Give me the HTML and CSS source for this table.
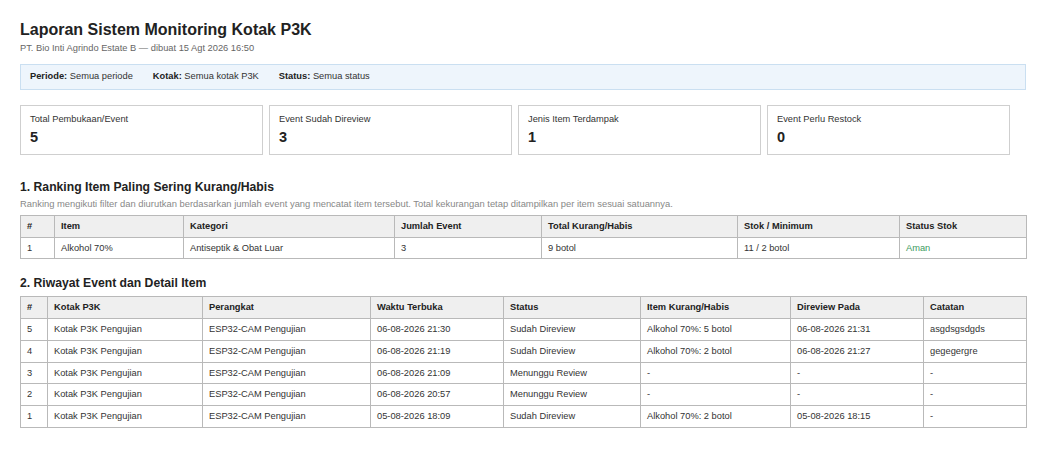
FILE: index.html
```html
<!DOCTYPE html>
<html lang="id">
<head>
<meta charset="utf-8">
<title>Laporan Sistem Monitoring Kotak P3K</title>
<link rel="stylesheet" href="styles.css">
</head>
<body>
<header class="report-head">
  <h1 class="title">Laporan Sistem Monitoring Kotak P3K</h1>
  <p class="subtitle">PT. Bio Inti Agrindo Estate B — dibuat 15 Agt 2026 16:50</p>
</header>

<div class="filters">
  <span class="filter"><b>Periode:</b> Semua periode</span>
  <span class="filter"><b>Kotak:</b> Semua kotak P3K</span>
  <span class="filter"><b>Status:</b> Semua status</span>
</div>

<div class="cards">
  <div class="card"><div class="card-label">Total Pembukaan/Event</div><div class="card-value">5</div></div>
  <div class="card"><div class="card-label">Event Sudah Direview</div><div class="card-value">3</div></div>
  <div class="card"><div class="card-label">Jenis Item Terdampak</div><div class="card-value">1</div></div>
  <div class="card"><div class="card-label">Event Perlu Restock</div><div class="card-value">0</div></div>
</div>

<section class="section">
  <h2 class="section-title">1. Ranking Item Paling Sering Kurang/Habis</h2>
  <p class="caption">Ranking mengikuti filter dan diurutkan berdasarkan jumlah event yang mencatat item tersebut. Total kekurangan tetap ditampilkan per item sesuai satuannya.</p>
  <table class="grid rank">
    <colgroup>
      <col class="r1"><col class="r2"><col class="r3"><col class="r4"><col class="r5"><col class="r6"><col class="r7">
    </colgroup>
    <thead>
      <tr><th>#</th><th>Item</th><th>Kategori</th><th>Jumlah Event</th><th>Total Kurang/Habis</th><th>Stok / Minimum</th><th>Status Stok</th></tr>
    </thead>
    <tbody>
      <tr><td>1</td><td>Alkohol 70%</td><td>Antiseptik &amp; Obat Luar</td><td>3</td><td>9 botol</td><td>11 / 2 botol</td><td class="ok">Aman</td></tr>
    </tbody>
  </table>
</section>

<section class="section second">
  <h2 class="section-title">2. Riwayat Event dan Detail Item</h2>
  <table class="grid history">
    <colgroup>
      <col class="h1"><col class="h2"><col class="h3"><col class="h4"><col class="h5"><col class="h6"><col class="h7"><col class="h8">
    </colgroup>
    <thead>
      <tr><th>#</th><th>Kotak P3K</th><th>Perangkat</th><th>Waktu Terbuka</th><th>Status</th><th>Item Kurang/Habis</th><th>Direview Pada</th><th>Catatan</th></tr>
    </thead>
    <tbody>
      <tr><td>5</td><td>Kotak P3K Pengujian</td><td>ESP32-CAM Pengujian</td><td>06-08-2026 21:30</td><td>Sudah Direview</td><td>Alkohol 70%: 5 botol</td><td>06-08-2026 21:31</td><td>asgdsgsdgds</td></tr>
      <tr><td>4</td><td>Kotak P3K Pengujian</td><td>ESP32-CAM Pengujian</td><td>06-08-2026 21:19</td><td>Sudah Direview</td><td>Alkohol 70%: 2 botol</td><td>06-08-2026 21:27</td><td>gegegergre</td></tr>
      <tr><td>3</td><td>Kotak P3K Pengujian</td><td>ESP32-CAM Pengujian</td><td>06-08-2026 21:09</td><td>Menunggu Review</td><td>-</td><td>-</td><td>-</td></tr>
      <tr><td>2</td><td>Kotak P3K Pengujian</td><td>ESP32-CAM Pengujian</td><td>06-08-2026 20:57</td><td>Menunggu Review</td><td>-</td><td>-</td><td>-</td></tr>
      <tr><td>1</td><td>Kotak P3K Pengujian</td><td>ESP32-CAM Pengujian</td><td>05-08-2026 18:09</td><td>Sudah Direview</td><td>Alkohol 70%: 2 botol</td><td>05-08-2026 18:15</td><td>-</td></tr>
    </tbody>
  </table>
</section>
</body>
</html>
```

FILE: styles.css
```css
html, body {
  margin: 0;
  padding: 0;
  background: #fff;
}

body {
  padding: 20px 12px 20px 20px;
  font-family: "Liberation Sans", Arial, sans-serif;
  color: #222;
  font-size: 9.3px;
}

.title {
  margin: 0;
  font-size: 16px;
  line-height: 20px;
  font-weight: bold;
  color: #222;
}

.subtitle {
  margin: 2px 0 0;
  font-size: 9.3px;
  line-height: 13px;
  color: #666;
}

.filters {
  margin-top: 9px;
  display: flex;
  gap: 20px;
  padding: 4px 9px 6px;
  line-height: 14px;
  font-size: 9.3px;
  background: #eef5fc;
  border: 1px solid #cadff1;
  color: #333;
}

.filters b {
  color: #222;
}

.cards {
  margin-top: 15px;
  display: grid;
  grid-template-columns: repeat(4, 243px);
  gap: 6px;
}

.card {
  height: 50px;
  box-sizing: border-box;
  border: 1px solid #cfcfcf;
  padding: 7px 9px;
}

.card-label {
  font-size: 9.3px;
  line-height: 13px;
  color: #333;
}

.card-value {
  margin-top: 2px;
  font-size: 14.5px;
  line-height: 18px;
  font-weight: bold;
  color: #222;
}

.section {
  margin-top: 24px;
}

.section.second {
  margin-top: 16px;
}

.section-title {
  margin: 0;
  font-size: 12.2px;
  line-height: 16px;
  font-weight: bold;
  color: #222;
}

.caption {
  margin: 2px 0 0;
  font-size: 9.4px;
  line-height: 13px;
  color: #888;
}

.grid {
  border-collapse: collapse;
  table-layout: fixed;
  width: 1006px;
  font-size: 9.3px;
  color: #333;
}

.rank {
  margin-top: 5px;
}

.history {
  margin-top: 5px;
}

.grid th,
.grid td {
  border: 1px solid #b9b9b9;
  padding: 4px 6px;
  line-height: 12.7px;
  height: 12.7px;
  text-align: left;
  white-space: nowrap;
  overflow: hidden;
}

.grid th {
  background: #efefef;
  font-weight: bold;
  color: #222;
}

.grid td.ok {
  color: #3d9a5e;
}

.r1 { width: 34px; }
.r2 { width: 129px; }
.r3 { width: 211px; }
.r4 { width: 147px; }
.r5 { width: 196px; }
.r6 { width: 162px; }
.r7 { width: 127px; }

.h1 { width: 27px; }
.h2 { width: 155px; }
.h3 { width: 168px; }
.h4 { width: 133px; }
.h5 { width: 137px; }
.h6 { width: 150px; }
.h7 { width: 133px; }
.h8 { width: 103px; }
```
